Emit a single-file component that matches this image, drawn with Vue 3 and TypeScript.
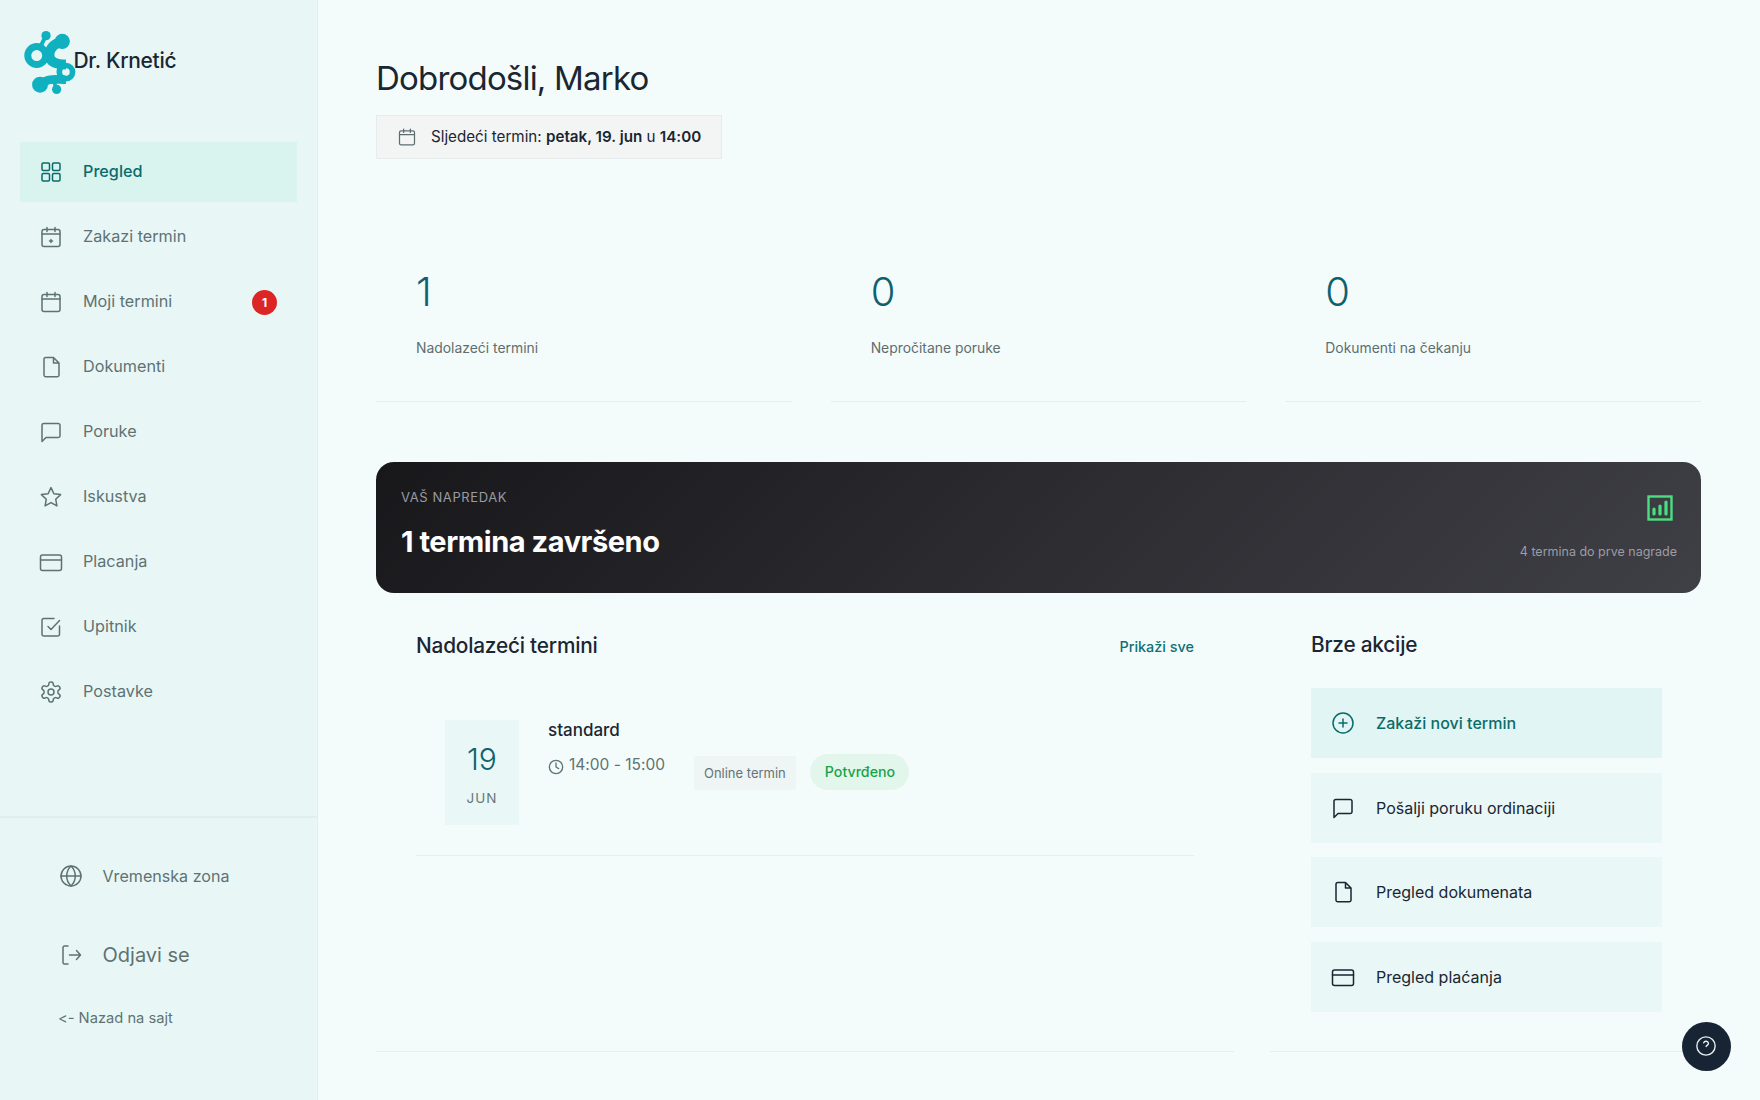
<template>
  <div class="layout">
    <!-- Sidebar -->
    <aside class="sidebar">
      <div class="brand">
        <svg class="brand-logo" viewBox="60 85 180 205" fill="none" stroke="#0fb0bf">
          <path d="M138 105 L120 140" stroke-width="12" />
          <path d="M187 122 C165 128 150 140 148 162 C147 186 172 192 198 192" stroke-width="30" />
          <path d="M198 238 C170 238 145 230 120 253" stroke-width="26" />
          <path d="M170 267 L158 232" stroke-width="11" />
          <circle cx="138" cy="105" r="14" fill="#0fb0bf" stroke="none" />
          <circle cx="187" cy="122" r="23" fill="#0fb0bf" stroke="none" />
          <circle cx="110" cy="165" r="27" stroke-width="21" />
          <circle cx="198" cy="215" r="20" stroke-width="17" />
          <circle cx="120" cy="253" r="24" fill="#0fb0bf" stroke="none" />
          <circle cx="170" cy="267" r="14" fill="#0fb0bf" stroke="none" />
        </svg>
        <span class="brand-name">Dr. Krnetić</span>
      </div>

      <nav class="nav">
        <a v-for="item in navItems" :key="item.label" class="nav-item" :class="{ 'nav-item--active': item.active }">
          <svg class="icon" viewBox="0 0 24 24" v-html="icons[item.icon]"></svg>
          <span class="nav-label">{{ item.label }}</span>
          <span v-if="item.badge" class="nav-badge">{{ item.badge }}</span>
        </a>
      </nav>

      <div class="sidebar-footer">
        <a class="footer-row">
          <svg class="icon" viewBox="0 0 24 24" v-html="icons.globe"></svg>
          <span>Vremenska zona</span>
        </a>
        <a class="footer-row footer-row--logout">
          <svg class="icon" viewBox="0 0 24 24" v-html="icons.logout"></svg>
          <span>Odjavi se</span>
        </a>
        <a class="back-link">&lt;- Nazad na sajt</a>
      </div>
    </aside>

    <!-- Main content -->
    <main class="main">
      <h1 class="welcome">Dobrodošli, Marko</h1>
      <div class="next-chip">
        <svg class="icon chip-icon" viewBox="0 0 24 24" v-html="icons.calendar"></svg>
        <span class="chip-text">Sljedeći termin: <b>petak, 19. jun</b> u <b>14:00</b></span>
      </div>

      <section class="stats">
        <div v-for="stat in stats" :key="stat.label" class="stat">
          <div class="stat-value">{{ stat.value }}</div>
          <div class="stat-label">{{ stat.label }}</div>
        </div>
      </section>

      <section class="progress">
        <div>
          <div class="progress-eyebrow">VAŠ NAPREDAK</div>
          <div class="progress-title">1 termina završeno</div>
        </div>
        <div class="progress-side">
          <svg class="progress-icon" viewBox="0 0 26 26" fill="none">
            <rect x="1.5" y="1.5" width="23" height="23" stroke="#4ade80" stroke-width="2.4" />
            <path d="M7 14v5M13 11v8M19 7v12" stroke="#4ade80" stroke-width="3.2" stroke-linecap="round" />
          </svg>
          <div class="progress-note">4 termina do prve nagrade</div>
        </div>
      </section>

      <section class="lower">
        <div class="panel">
          <div class="panel-head">
            <h2 class="panel-title">Nadolazeći termini</h2>
            <a class="show-all">Prikaži sve</a>
          </div>
          <div class="appt">
            <div class="appt-date">
              <span class="appt-day">19</span>
              <span class="appt-month">JUN</span>
            </div>
            <div class="appt-info">
              <div class="appt-name">standard</div>
              <div class="appt-time">
                <svg class="clock" viewBox="0 0 24 24" v-html="icons.clock"></svg>
                <span>14:00 - 15:00</span>
              </div>
            </div>
            <span class="tag">Online termin</span>
            <span class="pill">Potvrđeno</span>
          </div>
        </div>

        <div class="panel panel--side">
          <h2 class="panel-title panel-title--quick">Brze akcije</h2>
          <div class="actions">
            <a v-for="action in actions" :key="action.label" class="action" :class="{ 'action--primary': action.primary }">
              <svg class="icon" viewBox="0 0 24 24" v-html="icons[action.icon]"></svg>
              <span>{{ action.label }}</span>
            </a>
          </div>
        </div>
      </section>
    </main>

    <button class="help" aria-label="Pomoć">
      <svg viewBox="0 0 24 24" v-html="icons.help"></svg>
    </button>
  </div>
</template>

<script setup lang="ts">
const icons: Record<string, string> = {
  grid: '<rect x="3" y="3" width="7.500" height="7.500" rx="1.200"/><rect x="13.500" y="3" width="7.500" height="7.500" rx="1.200"/><rect x="3" y="13.500" width="7.500" height="7.500" rx="1.200"/><rect x="13.500" y="13.500" width="7.500" height="7.500" rx="1.200"/>',
  calendarPlus: '<rect x="3" y="4.500" width="18" height="17" rx="2"/><path d="M8 2.500v4M16 2.500v4M3 9h18M12 14.500v3M10.500 16h3"/>',
  calendar: '<rect x="3" y="4.500" width="18" height="17" rx="2"/><path d="M8 2.500v4M16 2.500v4M3 9h18"/>',
  file: '<path d="M6.800 2.500h7.700L20 8v12a1.800 1.800 0 0 1-1.800 1.800H6.800A1.800 1.800 0 0 1 5 20V4.300a1.800 1.800 0 0 1 1.800-1.800ZM14.500 2.500V8H20"/>',
  chat: '<path d="M4.800 3.500h14.400A1.800 1.800 0 0 1 21 5.300v10.400a1.800 1.800 0 0 1-1.800 1.800H7L3 21.500V5.300a1.800 1.800 0 0 1 1.800-1.800Z"/>',
  star: '<path d="M12 2.600l2.900 6.100 6.700.9-4.900 4.600 1.200 6.700-5.900-3.300-5.900 3.300 1.200-6.700-4.900-4.600 6.700-.9L12 2.600Z"/>',
  card: '<rect x="1.500" y="5" width="21" height="15.500" rx="2"/><path d="M1.500 10h21"/>',
  check: '<path d="M20.500 11v8.200a1.800 1.800 0 0 1-1.800 1.800H4.800A1.800 1.800 0 0 1 3 19.200V5.300a1.800 1.800 0 0 1 1.800-1.800H15M9 11.500l3 3 8.500-9"/>',
  gear: '<path d="M12.220 2h-.44a2 2 0 0 0-2 2v.18a2 2 0 0 1-1 1.730l-.43.250a2 2 0 0 1-2 0l-.15-.080a2 2 0 0 0-2.730.730l-.22.380a2 2 0 0 0 .730 2.730l.150.100a2 2 0 0 1 1 1.720v.510a2 2 0 0 1-1 1.740l-.150.090a2 2 0 0 0-.730 2.730l.220.380a2 2 0 0 0 2.730.730l.150-.080a2 2 0 0 1 2 0l.430.250a2 2 0 0 1 1 1.730V20a2 2 0 0 0 2 2h.440a2 2 0 0 0 2-2v-.180a2 2 0 0 1 1-1.730l.430-.250a2 2 0 0 1 2 0l.150.080a2 2 0 0 0 2.730-.730l.220-.390a2 2 0 0 0-.730-2.730l-.150-.080a2 2 0 0 1-1-1.740v-.500a2 2 0 0 1 1-1.740l.150-.090a2 2 0 0 0 .730-2.730l-.220-.380a2 2 0 0 0-2.730-.730l-.150.080a2 2 0 0 1-2 0l-.430-.250a2 2 0 0 1-1-1.730V4a2 2 0 0 0-2-2z"/><circle cx="12" cy="12" r="3"/>',
  globe: '<circle cx="12" cy="12" r="10"/><path d="M2 12h20M12 2c3 3 4.300 6.300 4.300 10S15 19 12 22c-3-3-4.300-6.300-4.300-10S9 5 12 2Z"/>',
  logout: '<path d="M9 3H5.500A1.500 1.500 0 0 0 4 4.500v15A1.500 1.500 0 0 0 5.500 21H9M10.500 12h11M17.500 7.500l4 4.500-4 4.500"/>',
  clock: '<circle cx="12" cy="12" r="10"/><path d="M12 6v6l4 2.500"/>',
  plus: '<circle cx="12" cy="12" r="10"/><path d="M12 8v8M8 12h8"/>',
  help: '<circle cx="12" cy="12" r="10"/><path d="M9.500 8.500a2.700 2.700 0 0 1 5.200.8c0 1.700-2.200 2-2.600 3.200"/>',
}

interface NavItem {
  label: string
  icon: string
  active?: boolean
  badge?: number
}

const navItems: NavItem[] = [
  { label: 'Pregled', icon: 'grid', active: true },
  { label: 'Zakazi termin', icon: 'calendarPlus' },
  { label: 'Moji termini', icon: 'calendar', badge: 1 },
  { label: 'Dokumenti', icon: 'file' },
  { label: 'Poruke', icon: 'chat' },
  { label: 'Iskustva', icon: 'star' },
  { label: 'Placanja', icon: 'card' },
  { label: 'Upitnik', icon: 'check' },
  { label: 'Postavke', icon: 'gear' },
]

const stats = [
  { value: '1', label: 'Nadolazeći termini' },
  { value: '0', label: 'Nepročitane poruke' },
  { value: '0', label: 'Dokumenti na čekanju' },
]

const actions = [
  { label: 'Zakaži novi termin', icon: 'plus', primary: true },
  { label: 'Pošalji poruku ordinaciji', icon: 'chat' },
  { label: 'Pregled dokumenata', icon: 'file' },
  { label: 'Pregled plaćanja', icon: 'card' },
]
</script>

<style>
html,
body {
  margin: 0;
  background: #f4fcfb;
}
</style>

<style scoped>
.layout {
  display: flex;
  min-height: 1100px;
  font-family: Inter, 'Noto Sans', sans-serif;
  font-variant-ligatures: none;
  font-feature-settings: 'calt' 0;
  color: #1a2632;
}

/* === Sidebar === */
.sidebar {
  width: 317px;
  flex-shrink: 0;
  display: flex;
  flex-direction: column;
  background: #e8f7f6;
  border-right: 1px solid #e0f0ee;
}
.brand {
  display: flex;
  align-items: center;
  height: 122px;
  padding-left: 20px;
}
.brand-logo {
  width: 60px;
  height: 68px;
  margin-top: 3px;
  margin-right: -6.500px;
  flex-shrink: 0;
}
.brand-name {
  margin-top: -2px;
  font-size: 21px;
  font-weight: 500;
  letter-spacing: -0.3px;
}
.nav {
  display: flex;
  flex-direction: column;
  gap: 5px;
  padding: 20px 20px 0;
}
.nav-item {
  display: flex;
  align-items: center;
  gap: 20px;
  height: 60px;
  padding: 0 20px 0 19px;
  font-size: 16.200px;
  color: #5e7274;
}
.nav-label {
  flex: 1;
  padding-bottom: 2px;
}
.nav-item--active {
  background: #d9f3ef;
  color: #0b6b6b;
  font-weight: 500;
}
.nav-badge {
  width: 25px;
  height: 25px;
  border-radius: 50%;
  background: #dc2626;
  color: #fff;
  font-size: 12px;
  font-weight: 700;
  display: flex;
  align-items: center;
  justify-content: center;
}
.icon {
  width: 24px;
  height: 24px;
  flex-shrink: 0;
  fill: none;
  stroke: currentColor;
  stroke-width: 1.500;
  stroke-linecap: round;
  stroke-linejoin: round;
}
.sidebar-footer {
  margin-top: auto;
  border-top: 2px solid #deefed;
  padding: 28px 40px 72px 59px;
  color: #5e7274;
}
.footer-row {
  display: flex;
  align-items: center;
  gap: 19.500px;
  height: 60px;
  font-size: 16.100px;
}
.footer-row--logout {
  margin-top: 19px;
  font-size: 20px;
}
.back-link {
  display: block;
  margin: 23px 0 0 -1px;
  font-size: 14.700px;
  line-height: 20px;
}

/* === Main === */
.main {
  flex: 1;
  min-width: 0;
  padding: 56px 59px 0 58px;
}
.welcome {
  margin: 0 0 14px;
  font-size: 33px;
  line-height: 45px;
  font-weight: 400;
  letter-spacing: -0.800px;
}
.next-chip {
  display: inline-flex;
  align-items: center;
  gap: 14px;
  height: 44px;
  box-sizing: border-box;
  padding: 0 20px;
  background: #f3f5f5;
  border: 1px solid #e6ecec;
  font-size: 15.200px;
}
.chip-text {
  padding-bottom: 2px;
}
.next-chip b {
  font-weight: 600;
}
.chip-icon {
  width: 20px;
  height: 20px;
  color: #5e6e70;
}

/* === Stats === */
.stats {
  display: grid;
  grid-template-columns: repeat(3, 1fr);
  gap: 39px;
  margin-top: 69px;
}
.stat {
  padding: 40px 40px 41px;
  border-bottom: 1px solid #e6eeee;
}
.stat-value {
  font-size: 40px;
  line-height: 48px;
  font-weight: 300;
  color: #0e6270;
}
.stat-label {
  margin-top: 20px;
  font-size: 13.900px;
  line-height: 24px;
  color: #5e6e70;
}

/* === Progress banner === */
.progress {
  display: flex;
  justify-content: space-between;
  margin-top: 60px;
  height: 131px;
  box-sizing: border-box;
  padding: 24px 24px 0 25px;
  border-radius: 18px;
  background: linear-gradient(135deg, #18181b 0%, #3f3f46 100%);
}
.progress-eyebrow {
  font-size: 13px;
  line-height: 22px;
  letter-spacing: 0.600px;
  color: #9a9aa2;
}
.progress-title {
  margin-top: 14px;
  font-size: 29px;
  line-height: 40px;
  font-weight: 700;
  color: #fff;
  letter-spacing: -0.450px;
}
.progress-side {
  display: flex;
  flex-direction: column;
  align-items: flex-end;
}
.progress-icon {
  width: 26px;
  height: 26px;
  margin: 9px 4px 0 0;
}
.progress-note {
  margin-top: 21px;
  font-size: 12.500px;
  line-height: 20px;
  color: #9d9da4;
}

/* === Lower panels === */
.lower {
  display: grid;
  grid-template-columns: 858px 431px;
  gap: 36px;
}
.panel {
  padding: 39px 40px 40px;
  border-bottom: 1px solid #e6eeee;
}
.panel--side {
  padding: 39px 39px 39px 41px;
}
.panel-head {
  display: flex;
  align-items: center;
  justify-content: space-between;
  padding-bottom: 29px;
}
.panel-title {
  margin: 0;
  font-size: 20.800px;
  line-height: 28px;
  font-weight: 500;
  letter-spacing: -0.200px;
}
.panel-title--quick {
  margin: -1px 0 0;
}
.show-all {
  font-size: 14.400px;
  font-weight: 450;
  color: #0e7078;
}
.appt {
  display: flex;
  align-items: center;
  padding: 31px 29px 30px;
  border-bottom: 1px solid #e6eeee;
}
.appt-date {
  width: 74px;
  height: 105px;
  flex-shrink: 0;
  background: #e9f7f6;
  display: flex;
  flex-direction: column;
  align-items: center;
  justify-content: center;
  gap: 10px;
}
.appt-day {
  font-size: 30px;
  line-height: 40px;
  font-weight: 300;
  color: #0e6270;
}
.appt-month {
  font-size: 13.500px;
  line-height: 18px;
  letter-spacing: 1px;
  color: #66787a;
}
.appt-info {
  align-self: flex-start;
  margin-left: 29px;
  margin-right: 29px;
  margin-top: -1px;
}
.appt-name {
  font-size: 17px;
  line-height: 22px;
  font-weight: 500;
}
.appt-time {
  display: flex;
  align-items: center;
  gap: 5px;
  margin-top: 13px;
  font-size: 15.500px;
  line-height: 22px;
  color: #5e7274;
}
.clock {
  width: 16px;
  height: 16px;
  margin-top: 3px;
  fill: none;
  stroke: currentColor;
  stroke-width: 2;
  stroke-linecap: round;
}
.tag {
  padding: 0 10px;
  height: 34px;
  display: flex;
  align-items: center;
  background: #eff4f4;
  font-size: 13px;
  color: #637577;
  border-radius: 2px;
}
.pill {
  margin-left: 14px;
  margin-top: -2px;
  padding: 0 14px 0 15px;
  height: 36px;
  display: flex;
  align-items: center;
  border-radius: 18px;
  background: #e3f6ec;
  font-size: 14.200px;
  font-weight: 500;
  color: #16a34a;
}
.actions {
  display: flex;
  flex-direction: column;
  gap: 14.700px;
  margin-top: 29px;
}
.action {
  display: flex;
  align-items: center;
  gap: 21px;
  height: 70px;
  padding: 0 20px;
  background: #e9f7f6;
  font-size: 16px;
}
.action--primary {
  background: #e1f6f4;
  color: #0b6b6b;
  font-weight: 500;
}

/* === Help button === */
.help {
  position: fixed;
  right: 29.500px;
  bottom: 29.500px;
  width: 49px;
  height: 49px;
  padding: 0;
  border: none;
  border-radius: 50%;
  background: #172433;
  display: flex;
  align-items: center;
  justify-content: center;
}
.help svg {
  width: 22px;
  height: 22px;
  fill: none;
  stroke: #e8f2f2;
  stroke-width: 1.500;
  stroke-linecap: round;
}
</style>
